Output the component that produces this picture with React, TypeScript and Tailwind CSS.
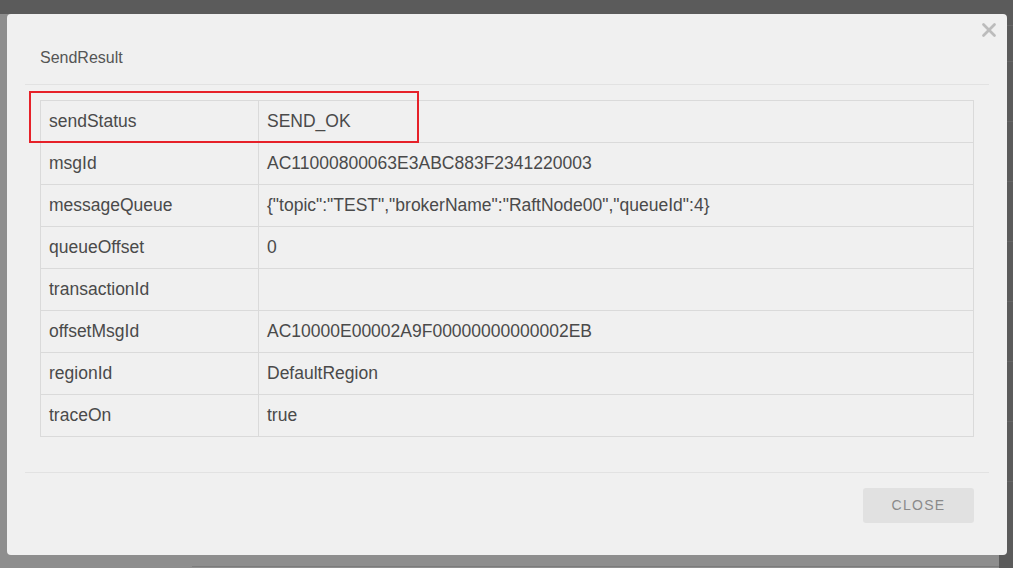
import { X } from 'lucide-react';

const rows: [string, string][] = [
  ['sendStatus', 'SEND_OK'],
  ['msgId', 'AC11000800063E3ABC883F2341220003'],
  ['messageQueue', '{"topic":"TEST","brokerName":"RaftNode00","queueId":4}'],
  ['queueOffset', '0'],
  ['transactionId', ''],
  ['offsetMsgId', 'AC10000E00002A9F00000000000002EB'],
  ['regionId', 'DefaultRegion'],
  ['traceOn', 'true'],
];

export default function App() {
  return (
    <div className="relative w-[1013px] h-[568px] overflow-hidden flex flex-col bg-[#5b5b5b] font-['Liberation_Sans',Arial,sans-serif]">
      {/* page behind the backdrop */}
      <div className="h-[14px] shrink-0" />
      <div className="flex flex-1">
        <div className="w-[999px] bg-[#8e8e8e] flex flex-col justify-end">
          <div className="ml-[192px] h-px mb-[1px] bg-[#7c7c7c]" />
        </div>
        <div className="flex-1 flex flex-col">
          <div className="mt-[11px] h-px bg-[#666]" />
          <div className="mt-[35px] h-px bg-[#666]" />
          <div className="mt-[59px] h-px bg-[#666]" />
          <div className="mt-[59px] h-px bg-[#666]" />
          <div className="mt-[59px] h-px bg-[#666]" />
          <div className="mt-[59px] h-px bg-[#666]" />
          <div className="mt-[59px] h-px bg-[#666]" />
          <div className="mt-[59px] h-px bg-[#666]" />
          <div className="mt-[59px] h-px bg-[#666]" />
        </div>
      </div>

      {/* dialog */}
      <div className="absolute left-[7px] top-[14px] w-[1000px] h-[541px] rounded-[4px] bg-[#f0f0f0] flex flex-col">
        <button type="button" className="absolute right-[7px] top-[5px] text-[#bcbcbc]">
          <X size={22} strokeWidth={3} />
        </button>

        <div className="px-[33px] pt-[35px] h-[70px]">
          <h2 className="text-[16px] leading-[18px] text-[#555]">SendResult</h2>
        </div>
        <div className="mx-[18px] h-px bg-[#e2e2e2]" />

        <div className="relative pl-[33px] pr-[33px] pt-[15px]">
          <div className="border-t border-l border-[#dadada] text-[17.5px] text-[#4a4a4a]">
            {rows.map(([k, v]) => (
              <div key={k} className="flex h-[42px]">
                <div className="w-[218px] shrink-0 flex items-center pl-[8px] border-r border-b border-[#dadada]">{k}</div>
                <div className="flex-1 flex items-center pl-[8px] border-r border-b border-[#dadada]">{v}</div>
              </div>
            ))}
          </div>
          {/* highlight */}
          <div className="absolute left-[22px] top-[6px] w-[390px] h-[52px] border-2 border-[#e62129]" />
        </div>

        <div className="mt-[35px] mx-[18px] h-px bg-[#e2e2e2]" />

        <div className="flex justify-end pr-[33px] pt-[15px]">
          <button
            type="button"
            className="w-[111px] h-[35px] rounded-[3px] bg-[#e1e1e1] text-[14px] tracking-[1.3px] text-[#8a8a8a]"
          >
            CLOSE
          </button>
        </div>
      </div>
    </div>
  );
}
